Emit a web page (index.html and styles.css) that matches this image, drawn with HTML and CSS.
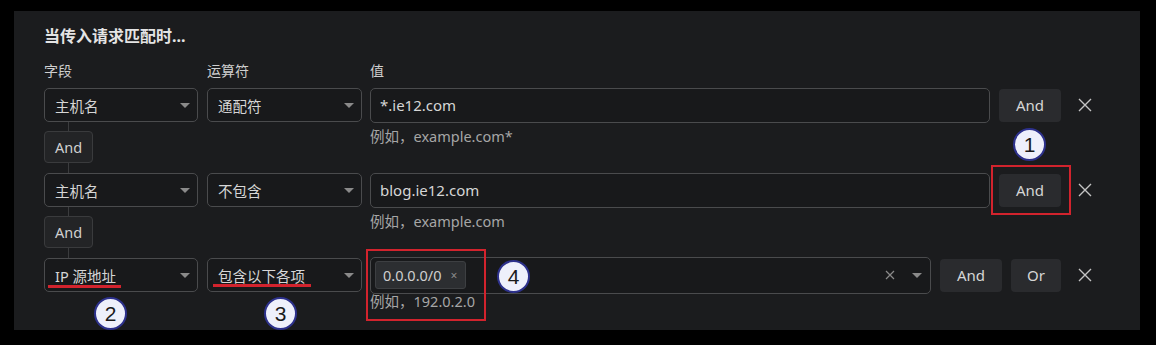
FILE: index.html
```html
<!DOCTYPE html>
<html lang="zh-CN">
<head>
    <meta charset="UTF-8">
    <meta name="viewport" content="width=device-width, initial-scale=1.0">
    <title>规则表达式</title>
    <link rel="stylesheet" href="styles.css">
</head>
<body>
    <div class="panel">
        <h2 class="panel-title">当传入请求匹配时...</h2>

        <div class="labels">
            <div class="field-col">字段</div>
            <div class="op-col">运算符</div>
            <div class="value-col">值</div>
        </div>

        <!-- 第一条 -->
        <div class="rule-row">
            <div class="field-col">
                <div class="select"><span>主机名</span><i class="caret"></i></div>
            </div>
            <div class="op-col">
                <div class="select"><span>通配符</span><i class="caret"></i></div>
            </div>
            <div class="value-col">
                <div class="input">*.ie12.com</div>
                <button class="btn">And</button>
                <span class="remove">
                    <svg width="14" height="14" viewBox="0 0 14 14"><path d="M1 1L13 13M13 1L1 13" stroke="#c4c4c4" stroke-width="1.4" fill="none"/></svg>
                </span>
            </div>
        </div>
        <div class="link-row">
            <div class="field-col connector"><span class="link-tag">And</span></div>
            <div class="op-col"></div>
            <div class="value-col"><p class="hint">例如，example.com*</p></div>
        </div>

        <!-- 第二条 -->
        <div class="rule-row">
            <div class="field-col">
                <div class="select"><span>主机名</span><i class="caret"></i></div>
            </div>
            <div class="op-col">
                <div class="select"><span>不包含</span><i class="caret"></i></div>
            </div>
            <div class="value-col">
                <div class="input">blog.ie12.com</div>
                <button class="btn">And</button>
                <span class="remove">
                    <svg width="14" height="14" viewBox="0 0 14 14"><path d="M1 1L13 13M13 1L1 13" stroke="#c4c4c4" stroke-width="1.4" fill="none"/></svg>
                </span>
            </div>
        </div>
        <div class="link-row">
            <div class="field-col connector"><span class="link-tag">And</span></div>
            <div class="op-col"></div>
            <div class="value-col"><p class="hint">例如，example.com</p></div>
        </div>

        <!-- 第三条 -->
        <div class="rule-row">
            <div class="field-col">
                <div class="select"><span>IP 源地址</span><i class="caret"></i></div>
            </div>
            <div class="op-col">
                <div class="select"><span>包含以下各项</span><i class="caret"></i></div>
            </div>
            <div class="value-col">
                <div class="input multi">
                    <span class="chip">0.0.0.0/0<em>×</em></span>
                    <span class="multi-tools">
                        <svg width="10" height="10" viewBox="0 0 10 10"><path d="M1 1L9 9M9 1L1 9" stroke="#8a8a8a" stroke-width="1.2" fill="none"/></svg>
                        <i class="caret"></i>
                    </span>
                </div>
                <button class="btn">And</button>
                <button class="btn btn-or">Or</button>
                <span class="remove">
                    <svg width="14" height="14" viewBox="0 0 14 14"><path d="M1 1L13 13M13 1L1 13" stroke="#c4c4c4" stroke-width="1.4" fill="none"/></svg>
                </span>
            </div>
        </div>
        <div class="link-row last">
            <div class="field-col"></div>
            <div class="op-col"></div>
            <div class="value-col"><p class="hint">例如，192.0.2.0</p></div>
        </div>

        <!-- 标注 -->
        <div class="mark-box box-and"></div>
        <div class="mark-box box-ip"></div>
        <div class="mark-line line-field"></div>
        <div class="mark-line line-op"></div>
        <span class="badge badge-1">1</span>
        <span class="badge badge-2">2</span>
        <span class="badge badge-3">3</span>
        <span class="badge badge-4">4</span>
    </div>
</body>
</html>
```

FILE: styles.css
```css
body {
    margin: 0;
    padding: 11px 0 0 14px;
    background-color: #000;
    font-family: 'Noto Sans', 'Noto Sans CJK SC', sans-serif;
    color: #d4d4d4;
}
.panel {
    position: relative;
    box-sizing: border-box;
    width: 1126px;
    height: 319px;
    padding: 14px 43px 0 30px;
    background-color: #1b1c1e;
}
.panel-title {
    margin: 0 0 14px;
    font-size: 16px;
    line-height: 22px;
    font-weight: bold;
    color: #e4e4e4;
}
.labels, .rule-row, .link-row {
    display: flex;
}
.labels {
    font-size: 14px;
    line-height: 20px;
    color: #cfcfcf;
    margin-bottom: 7px;
}
.field-col {
    width: 154px;
    margin-right: 9px;
    flex-shrink: 0;
}
.op-col {
    width: 155px;
    margin-right: 8px;
    flex-shrink: 0;
}
.value-col {
    flex: 1;
    display: flex;
    align-items: center;
    gap: 9px;
}
.rule-row {
    align-items: center;
    height: 34px;
}
.select {
    box-sizing: border-box;
    height: 34px;
    display: flex;
    align-items: center;
    justify-content: space-between;
    padding: 0 7px 0 10px;
    border: 1px solid #4a4b4d;
    border-radius: 5px;
    background-color: #18191b;
    font-size: 14.5px;
    color: #d6d6d6;
}
.caret {
    width: 0;
    height: 0;
    border-left: 5px solid transparent;
    border-right: 5px solid transparent;
    border-top: 5px solid #8a8a8a;
}
.input {
    flex: 1;
    box-sizing: border-box;
    height: 35px;
    display: flex;
    align-items: center;
    padding: 0 9px;
    border: 1px solid #4a4b4d;
    border-radius: 5px;
    background-color: #18191b;
    font-size: 15px;
    color: #d6d6d6;
}
.input.multi {
    height: 37px;
    padding: 0 8px 0 4px;
    justify-content: space-between;
}
.chip {
    display: flex;
    align-items: center;
    gap: 9px;
    height: 28px;
    box-sizing: border-box;
    padding: 0 8px 0 7px;
    background-color: #2c2e31;
    border: 1px solid #3d3f42;
    border-radius: 3px;
    font-size: 14.5px;
    color: #cfcfcf;
}
.chip em {
    font-style: normal;
    font-size: 12px;
    color: #8a8a8a;
}
.multi-tools {
    display: flex;
    align-items: center;
    gap: 17px;
}
.btn {
    width: 62px;
    height: 33px;
    border: none;
    border-radius: 4px;
    background-color: #2a2b2e;
    color: #d6d6d6;
    font-family: inherit;
    font-size: 15px;
    padding: 0;
}
.btn-or {
    width: 50px;
}
.remove {
    width: 24px;
    margin-left: 3px;
    display: flex;
    justify-content: center;
}
.link-row {
    height: 51px;
}
.link-row.last {
    height: auto;
}
.connector {
    background: linear-gradient(#3b3c3e, #3b3c3e) no-repeat 24px 0 / 1px 100%;
    padding-top: 9px;
    box-sizing: border-box;
}
.link-tag {
    display: flex;
    align-items: center;
    justify-content: center;
    width: 49px;
    height: 32px;
    box-sizing: border-box;
    border: 1px solid #3a3b3d;
    border-radius: 4px;
    background-color: #232426;
    font-size: 14.5px;
    color: #d0d0d0;
}
.value-col .hint {
    margin: 5px 0 0;
    align-self: flex-start;
    font-size: 14.5px;
    line-height: 18px;
    color: #a6a6a6;
}
.link-row.last .hint {
    margin-top: 0;
}

/* 标注层 */
.mark-box {
    position: absolute;
    box-sizing: border-box;
    border: 2px solid #d2232d;
}
.box-and {
    left: 977px;
    top: 154px;
    width: 80px;
    height: 50px;
}
.box-ip {
    left: 352px;
    top: 238px;
    width: 120px;
    height: 72px;
}
.mark-line {
    position: absolute;
    height: 3px;
    background-color: #d2232d;
}
.line-field {
    left: 34px;
    top: 274px;
    width: 73px;
}
.line-op {
    left: 199px;
    top: 273px;
    width: 98px;
}
.badge {
    position: absolute;
    box-sizing: border-box;
    width: 33px;
    height: 33px;
    border: 2px solid #2d318c;
    border-radius: 50%;
    background-color: #eef0fb;
    color: #1a1a1a;
    font-family: 'Liberation Sans', sans-serif;
    font-size: 21px;
    line-height: 29px;
    text-align: center;
}
.badge-1 { left: 999px; top: 117px; }
.badge-2 { left: 80px; top: 286px; }
.badge-3 { left: 250px; top: 286px; }
.badge-4 { left: 483px; top: 249px; }
```
